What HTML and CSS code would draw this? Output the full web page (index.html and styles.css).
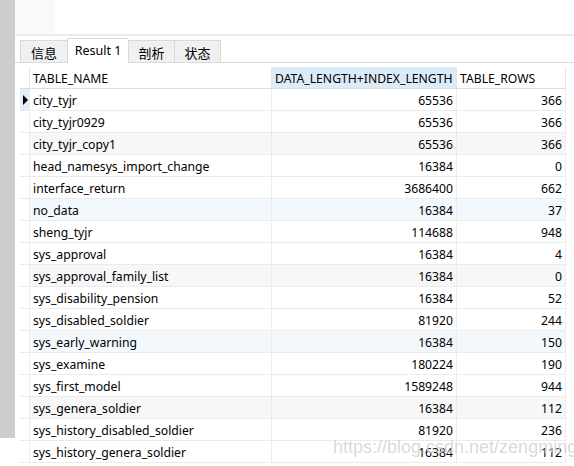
FILE: index.html
```html
<!DOCTYPE html>
<html>
<head>
<meta charset="utf-8">
<link rel="stylesheet" href="styles.css">
</head>
<body>
<div class="app">
  <div class="sidebar"></div>
  <div class="main">
    <div class="topbar"><div class="topbar-left"></div></div>
    <div class="divider"></div>
    <div class="tabs">
      <div class="tab">信息</div>
      <div class="tab active">Result 1</div>
      <div class="tab">剖析</div>
      <div class="tab">状态</div>
    </div>
    <div class="grid-wrap">
      <div class="grid">
        <div class="c g h"></div><div class="c h">TABLE_NAME</div><div class="c h sel">DATA_LENGTH+INDEX_LENGTH</div><div class="c h">TABLE_ROWS</div>

        <div class="c g cur"><span class="arrow"></span></div><div class="c">city_tyjr</div><div class="c n">65536</div><div class="c n">366</div>
        <div class="c g"></div><div class="c">city_tyjr0929</div><div class="c n">65536</div><div class="c n">366</div>
        <div class="c g"></div><div class="c gr">city_tyjr_copy1</div><div class="c n gr">65536</div><div class="c n gr">366</div>
        <div class="c g"></div><div class="c">head_namesys_import_change</div><div class="c n">16384</div><div class="c n">0</div>
        <div class="c g"></div><div class="c">interface_return</div><div class="c n">3686400</div><div class="c n">662</div>
        <div class="c g"></div><div class="c bl">no_data</div><div class="c n bl">16384</div><div class="c n bl">37</div>
        <div class="c g"></div><div class="c">sheng_tyjr</div><div class="c n">114688</div><div class="c n">948</div>
        <div class="c g"></div><div class="c">sys_approval</div><div class="c n">16384</div><div class="c n">4</div>
        <div class="c g"></div><div class="c gr">sys_approval_family_list</div><div class="c n gr">16384</div><div class="c n gr">0</div>
        <div class="c g"></div><div class="c">sys_disability_pension</div><div class="c n">16384</div><div class="c n">52</div>
        <div class="c g"></div><div class="c">sys_disabled_soldier</div><div class="c n">81920</div><div class="c n">244</div>
        <div class="c g"></div><div class="c bl">sys_early_warning</div><div class="c n bl">16384</div><div class="c n bl">150</div>
        <div class="c g"></div><div class="c">sys_examine</div><div class="c n">180224</div><div class="c n">190</div>
        <div class="c g"></div><div class="c">sys_first_model</div><div class="c n">1589248</div><div class="c n">944</div>
        <div class="c g"></div><div class="c gr">sys_genera_soldier</div><div class="c n gr">16384</div><div class="c n gr">112</div>
        <div class="c g"></div><div class="c">sys_history_disabled_soldier</div><div class="c n">81920</div><div class="c n">236</div>
        <div class="c g"></div><div class="c">sys_history_genera_soldier</div><div class="c n">16384</div><div class="c n">112</div>
      </div>
    </div>
  </div>
</div>
<div class="watermark">https://blog.csdn.net/zengmingen</div>
</body>
</html>
```

FILE: styles.css
```css
html, body {
  margin: 0;
  padding: 0;
}
body {
  width: 574px;
  height: 466px;
  overflow: hidden;
  background: #ffffff;
  font-family: "Noto Sans", "Noto Sans CJK SC", sans-serif;
  font-size: 12.2px;
  color: #000;
  position: relative;
}
.app {
  display: flex;
  height: 466px;
}
.sidebar {
  width: 15px;
  height: 438px;
  background: #cdcdcd;
  flex: none;
}
.main {
  flex: 1;
  display: flex;
  flex-direction: column;
}
.topbar {
  height: 34px;
  display: flex;
}
.topbar-left {
  width: 40px;
  background: #f9f9f9;
}
.divider {
  height: 2px;
  background: #ececec;
}
.tabs {
  height: 26px;
  display: flex;
  align-items: flex-end;
  padding-left: 5px;
  border-bottom: 1px solid #dadada;
}
.tab {
  height: 22px;
  box-sizing: border-box;
  border: 1px solid #d9d9d9;
  border-bottom: none;
  border-right: none;
  background: #f0f0f0;
  display: flex;
  align-items: center;
  justify-content: center;
  width: 47px;
  font-family: "Noto Sans CJK SC", sans-serif;
  font-size: 13px;
  padding-top: 1px;
}
.tab:nth-child(3) { width: 46px; }
.tab:nth-child(4) { width: 47px; border-right: 1px solid #d9d9d9; }
.tab.active {
  width: 61px;
  height: 25px;
  margin-bottom: -1px;
  background: #ffffff;
  font-family: "Noto Sans", sans-serif;
  font-size: 12.5px;
  padding-top: 0;
  padding-bottom: 2px;
}
.grid-wrap {
  padding: 4px 0 0 5px;
}
.grid {
  display: grid;
  grid-template-columns: 10px 242px 185px 109px;
}
.c {
  height: 22px;
  box-sizing: border-box;
  border-right: 1px solid #ececec;
  border-bottom: 1px solid #ebebeb;
  line-height: 20px;
  padding: 2px 3px 0;
  white-space: nowrap;
  overflow: hidden;
}
.c.h {
  border-bottom-color: #dcdcdc;
  border-right-color: #e4e4e4;
}
.c.h.sel {
  background: #dcebf8;
  text-overflow: clip;
}
.c.g {
  padding: 0;
  position: relative;
}
.c.cur {
  background: #e3eef9;
}
.c.n {
  text-align: right;
}
.gr {
  background: #f7f7f7;
}
.bl {
  background: #f3f8fd;
}
.arrow {
  position: absolute;
  left: 3px;
  top: 6px;
  width: 0;
  height: 0;
  border-top: 5px solid transparent;
  border-bottom: 5px solid transparent;
  border-left: 5px solid #000;
}
.watermark {
  position: absolute;
  left: 333px;
  top: 437px;
  font-family: "Liberation Sans", Arial, sans-serif;
  font-size: 18px;
  color: rgba(170, 170, 170, 0.45);
  text-shadow: 0 0 1px rgba(255, 255, 255, 0.8);
  white-space: nowrap;
  pointer-events: none;
}
```
